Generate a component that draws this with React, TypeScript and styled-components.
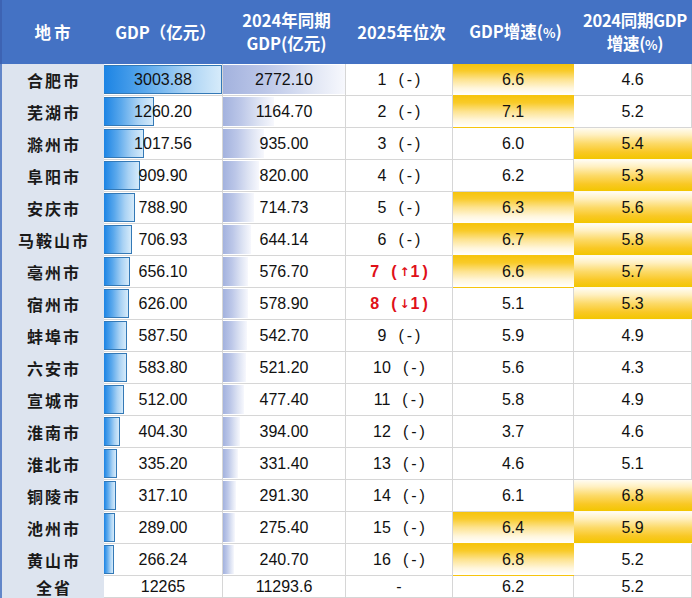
import React from "react";
import styled, { createGlobalStyle, css } from "styled-components";

const GlobalStyle = createGlobalStyle`
  html, body { margin: 0; padding: 0; background: #ffffff; }
  body { width: 692px; height: 598px; overflow: hidden; }
`;

const COLS = "104px 119px 123px 107px 121px 118px";
const CJK = `"Noto Sans CJK SC", "Noto Sans", sans-serif`;
const NUM = `"Liberation Sans", Arial, "Noto Sans CJK SC", sans-serif`;

const Table = styled.div`
  width: 692px;
  display: flex;
  flex-direction: column;
`;

const HeaderRow = styled.div`
  display: grid;
  grid-template-columns: ${COLS};
  height: 64px;
  background: #4472c4;
  border-left: 2px solid #3d63b3;
  box-sizing: border-box;
`;

const HeadCell = styled.div<{ $spacing?: number }>`
  display: flex;
  flex-direction: column;
  align-items: center;
  justify-content: center;
  color: #ffffff;
  font-family: ${CJK};
  font-weight: 700;
  font-size: 16.5px;
  line-height: 23px;
  letter-spacing: ${(p) => p.$spacing ?? 0}px;
  text-align: center;
  white-space: nowrap;
`;

const Pct = styled.span`
  font-size: 13px;
  font-weight: 700;
`;

const Row = styled.div<{ $h?: number }>`
  display: grid;
  grid-template-columns: ${COLS};
  height: ${(p) => p.$h ?? 32}px;
  line-height: 18px;
`;

const NameCell = styled.div`
  display: flex;
  align-items: center;
  justify-content: center;
  background: #dde4ef;
  border-left: 2px solid #6286c9;
  font-family: ${CJK};
  font-weight: 700;
  font-size: 16px;
  color: #1a1a1a;
  letter-spacing: 2px;
  padding-left: 2px;
  box-sizing: border-box;
`;

const Cell = styled.div<{ $hl?: "down" | "up" | null; $red?: boolean }>`
  position: relative;
  display: flex;
  align-items: center;
  justify-content: center;
  box-sizing: border-box;
  border-right: 1px solid #d6d6d6;
  border-bottom: 1px solid #d6d6d6;
  font-family: ${NUM};
  font-size: 16px;
  color: ${(p) => (p.$red ? "#e01018" : "#111111")};
  font-weight: ${(p) => (p.$red ? 700 : 400)};
  white-space: nowrap;
  ${(p) =>
    p.$hl === "down" &&
    css`
      border-color: transparent;
      background: linear-gradient(
        to bottom,
        #f6c40c 0%,
        #f9cb2a 22%,
        #fde390 50%,
        #fff6dc 78%,
        #ffffff 100%
      );
    `}
  ${(p) =>
    p.$hl === "up" &&
    css`
      border-color: transparent;
      background: linear-gradient(
        to bottom,
        #fffcf2 0%,
        #fff0c0 22%,
        #fcda68 50%,
        #f9c824 78%,
        #f2c600 100%
      );
    `}
`;

const Open = styled.span`
  margin: 0 3px 0 12px;
`;

const Close = styled.span`
  margin-left: 3px;
`;

const Arrow = styled.span`
  font-family: "DejaVu Sans", sans-serif;
  font-size: 12px;
  font-weight: 700;
  margin-right: 1px;
`;

const BarCell = styled.div`
  position: relative;
  display: flex;
  align-items: center;
  justify-content: center;
  box-sizing: border-box;
  border-right: 1px solid #d6d6d6;
  border-bottom: 1px solid #d6d6d6;
  padding: 1px 0 1px 0;
  font-family: ${NUM};
  font-size: 16px;
  color: #111111;
`;

const Bar = styled.div<{ $kind: "blue" | "gray" }>`
  position: absolute;
  left: 0;
  top: 1px;
  bottom: 1px;
  box-sizing: border-box;
  ${(p) =>
    p.$kind === "blue"
      ? css`
          background: linear-gradient(to right, #1c84e4 0%, #5aa8ec 35%, #a9d2f4 70%, #d6ebfa 100%);
          border: 1px solid #3479b6;
          border-left: none;
        `
      : css`
          background: linear-gradient(to right, #a3b2de 0%, #bcc7e8 35%, #dde3f3 70%, #f7f8fd 100%);
        `}
`;

const Value = styled.span`
  position: relative;
`;

type Rank = { n: number; arrow?: string };
type Item = [string, number, number, Rank, number, number];

const rows: Item[] = [
  ["合肥市", 3003.88, 2772.1, { n: 1 }, 6.6, 4.6],
  ["芜湖市", 1260.2, 1164.7, { n: 2 }, 7.1, 5.2],
  ["滁州市", 1017.56, 935.0, { n: 3 }, 6.0, 5.4],
  ["阜阳市", 909.9, 820.0, { n: 4 }, 6.2, 5.3],
  ["安庆市", 788.9, 714.73, { n: 5 }, 6.3, 5.6],
  ["马鞍山市", 706.93, 644.14, { n: 6 }, 6.7, 5.8],
  ["亳州市", 656.1, 576.7, { n: 7, arrow: "↑" }, 6.6, 5.7],
  ["宿州市", 626.0, 578.9, { n: 8, arrow: "↓" }, 5.1, 5.3],
  ["蚌埠市", 587.5, 542.7, { n: 9 }, 5.9, 4.9],
  ["六安市", 583.8, 521.2, { n: 10 }, 5.6, 4.3],
  ["宣城市", 512.0, 477.4, { n: 11 }, 5.8, 4.9],
  ["淮南市", 404.3, 394.0, { n: 12 }, 3.7, 4.6],
  ["淮北市", 335.2, 331.4, { n: 13 }, 4.6, 5.1],
  ["铜陵市", 317.1, 291.3, { n: 14 }, 6.1, 6.8],
  ["池州市", 289.0, 275.4, { n: 15 }, 6.4, 5.9],
  ["黄山市", 266.24, 240.7, { n: 16 }, 6.8, 5.2],
];

const max1 = 3003.88;
const max2 = 2772.1;
const W1 = 118;
const W2 = 122;

export default function App() {
  return (
    <>
      <GlobalStyle />
      <Table>
        <HeaderRow>
          <HeadCell $spacing={3}>地市</HeadCell>
          <HeadCell>GDP（亿元）</HeadCell>
          <HeadCell>
            <span>2024年同期</span>
            <span>GDP(亿元)</span>
          </HeadCell>
          <HeadCell>2025年位次</HeadCell>
          <HeadCell>
            <span>
              GDP增速(<Pct>%</Pct>)
            </span>
          </HeadCell>
          <HeadCell $spacing={-0.3}>
            <span>2024同期GDP</span>
            <span>
              增速(<Pct>%</Pct>)
            </span>
          </HeadCell>
        </HeaderRow>
        {rows.map(([name, g, g24, rank, s, s24]) => (
          <Row key={name}>
            <NameCell>{name}</NameCell>
            <BarCell>
              <Bar $kind="blue" style={{ width: `${Math.round((g / max1) * W1)}px` }} />
              <Value>{g.toFixed(2)}</Value>
            </BarCell>
            <BarCell>
              <Bar $kind="gray" style={{ width: `${Math.round((g24 / max2) * W2)}px` }} />
              <Value>{g24.toFixed(2)}</Value>
            </BarCell>
            <Cell $red={!!rank.arrow}>
              {rank.n}
              <Open>(</Open>
              {rank.arrow ? (
                <>
                  <Arrow>{rank.arrow}</Arrow>1
                </>
              ) : (
                "-"
              )}
              <Close>)</Close>
            </Cell>
            <Cell $hl={s >= 6.3 ? "down" : null}>{s.toFixed(1)}</Cell>
            <Cell $hl={s24 >= 5.3 ? "up" : null}>{s24.toFixed(1)}</Cell>
          </Row>
        ))}
        <Row $h={22}>
          <NameCell>全省</NameCell>
          <Cell>12265</Cell>
          <Cell>11293.6</Cell>
          <Cell>-</Cell>
          <Cell>6.2</Cell>
          <Cell>5.2</Cell>
        </Row>
      </Table>
    </>
  );
}
